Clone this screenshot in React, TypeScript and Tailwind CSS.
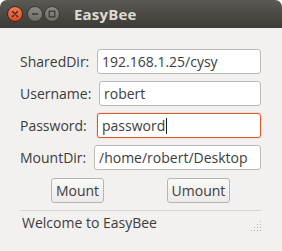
import React from "react";

const font = { fontFamily: '"Open Sans", "Noto Sans", "DejaVu Sans", sans-serif' };

function Row({ label, value, active, labelW }: { label: string; value: string; active?: boolean; labelW: string }) {
  return (
    <div className="flex items-center h-[25px]">
      <div className={`${labelW} shrink-0 text-[14px] text-[#3c3c3c]`}>{label}</div>
      <div
        className={`flex-1 h-[25px] rounded-[3px] bg-white flex items-center pl-[4px] text-[14px] text-[#3c3c3c] ${
          active ? "border border-[#e0582c] shadow-[0_0_0_1px_rgba(240,119,70,0.15)]" : "border border-[#bcbab5]"
        }`}
      >
        <span>{value}</span>
        {active && <span className="inline-block w-[1px] h-[16px] bg-[#222] ml-[1px]" />}
      </div>
    </div>
  );
}

export default function App() {
  return (
    <div className="w-[282px] h-[251px] bg-white" style={font}>
      <div className="w-[282px] h-[251px] rounded-t-[7px] overflow-hidden bg-[#f2f1f0] flex flex-col">
        <div className="h-[28px] bg-gradient-to-b from-[#5a5954] to-[#3c3b37] flex items-center pl-[7px]">
          <div className="w-[16px] h-[16px] rounded-full bg-gradient-to-b from-[#f37a52] to-[#dc4a22] border border-[#3a2a22] flex items-center justify-center">
            <svg width="8" height="8" viewBox="0 0 8 8">
              <path d="M1.5 1.5 L6.5 6.5 M6.5 1.5 L1.5 6.5" stroke="#3b2a24" strokeWidth="1.4" strokeLinecap="round" />
            </svg>
          </div>
          <div className="ml-[4px] w-[16px] h-[16px] rounded-full bg-gradient-to-b from-[#8a8984] to-[#6e6d68] border border-[#3a3935] flex items-center justify-center">
            <svg width="8" height="8" viewBox="0 0 8 8">
              <path d="M1 4 L7 4" stroke="#3a3935" strokeWidth="1.4" />
            </svg>
          </div>
          <div className="ml-[1px] w-[16px] h-[16px] rounded-full bg-gradient-to-b from-[#8a8984] to-[#6e6d68] border border-[#3a3935] flex items-center justify-center">
            <svg width="8" height="8" viewBox="0 0 8 8">
              <rect x="1.2" y="1.2" width="5.6" height="5.6" fill="none" stroke="#3a3935" strokeWidth="1.2" />
            </svg>
          </div>
          <div className="ml-[14px] text-[15px] font-bold text-[#dfdbd2] tracking-[0.2px]">EasyBee</div>
        </div>
        <div className="flex flex-col pl-[20px] pr-[21px] pt-[21px]">
          <div className="flex flex-col gap-[7px]">
            <Row label="SharedDir:" value="192.168.1.25/cysy" labelW="w-[77px]" />
            <Row label="Username:" value="robert" labelW="w-[79px]" />
            <Row label="Password:" value="password" active labelW="w-[77px]" />
            <Row label="MountDir:" value="/home/robert/Desktop" labelW="w-[74px]" />
          </div>
          <div className="flex mt-[8px] h-[25px]">
            <div className="ml-[31px] w-[53px] h-[25px] rounded-[3px] border border-[#b8b6b1] bg-gradient-to-b from-[#f9f9f8] to-[#ecebe9] flex items-center justify-center text-[14px] text-[#3c3c3c]">
              Mount
            </div>
            <div className="ml-[63px] w-[63px] h-[25px] rounded-[3px] border border-[#b8b6b1] bg-gradient-to-b from-[#f9f9f8] to-[#ecebe9] flex items-center justify-center text-[14px] text-[#3c3c3c]">
              Umount
            </div>
          </div>
          <div className="mt-[7px] h-[1px] bg-[#d6d4d0]" />
          <div className="flex items-center h-[20px] mt-[1px]">
            <div className="pl-[2px] text-[14px] text-[#3c3c3c]">Welcome to EasyBee</div>
            <div className="ml-auto mr-[-1px] mt-[6px]">
              <svg width="11" height="11" viewBox="0 0 11 11">
                {[
                  [9, 1], [9, 4], [6, 4], [9, 7], [6, 7], [3, 7], [9, 10], [6, 10], [3, 10], [0, 10],
                ].map(([x, y], i) => (
                  <rect key={i} x={x} y={y} width="1" height="1" fill="#b0aea9" />
                ))}
              </svg>
            </div>
          </div>
        </div>
      </div>
    </div>
  );
}
